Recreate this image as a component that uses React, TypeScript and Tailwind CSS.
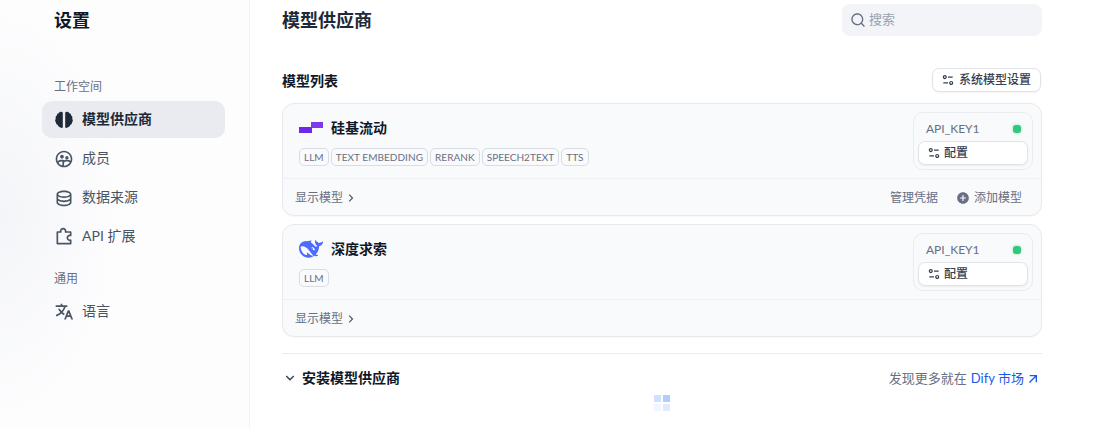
import React from "react";
import {
  RiGroup2Line,
  RiDatabase2Line,
  RiPuzzle2Line,
  RiTranslate2,
  RiEqualizer2Line,
  RiSearchLine,
  RiArrowRightSLine,
  RiArrowDownSLine,
  RiArrowRightUpLine,
  RiAddCircleFill,
} from "react-icons/ri";

const font = "font-['Lato','Noto_Sans_CJK_SC',sans-serif]";

function BrainIcon() {
  return (
    <svg width="20" height="20" viewBox="0 0 20 20" fill="currentColor">
      <path d="M8.800 2.400C7.300 1.300 5.300 1.900 4.700 3.300 3.600 3.400 2.800 4.300 2.900 5.400 1.700 6 1.200 7.500 1.800 8.700 0.900 9.900 1 11.500 2 12.400 1.900 13.500 2.600 14.400 3.500 14.600 3.800 16.100 4.900 17.100 6.200 17.300 7.100 18.200 8 18.200 8.800 17.500Z" />
      <path d="M11.200 2.400C12.700 1.300 14.700 1.900 15.300 3.300 16.400 3.400 17.200 4.300 17.100 5.400 18.300 6 18.800 7.500 18.200 8.700 19.100 9.900 19 11.500 18 12.400 18.100 13.500 17.400 14.400 16.500 14.600 16.200 16.100 15.100 17.100 13.800 17.300 12.900 18.200 12 18.200 11.200 17.500Z" />
    </svg>
  );
}

function NavItem({ icon, label, active }: { icon: React.ReactNode; label: string; active?: boolean }) {
  return (
    <div
      className={`flex h-[37px] items-center gap-[8px] rounded-[10px] pl-[12px] text-[14px] ${
        active ? "bg-[#e9ebf0] font-semibold text-[#1d2939]" : "text-[#495464]"
      }`}
    >
      <span className={`text-[20px] ${active ? "text-[#1d2939]" : "text-[#495464]"}`}>{icon}</span>
      <span className="pb-[2px]">{label}</span>
    </div>
  );
}

function Tag({ children }: { children: React.ReactNode }) {
  return (
    <span className="flex h-[18px] items-center rounded-[5px] border border-[#d9dce3] px-[4px] text-[10px] leading-none tracking-[0.05px] text-[#676f83]">
      {children}
    </span>
  );
}

function ApiBox() {
  return (
    <div className="h-[58px] w-[120px] rounded-[10px] border border-[#eaecf0] bg-[#f9fafb] p-[4px]">
      <div className="flex h-[24px] items-center justify-between pl-[8px] pr-[7px] text-[12px] text-[#676f83]">
        <span>API_KEY1</span>
        <span className="h-[8px] w-[8px] rounded-[3px] bg-[#32c77d] shadow-[0_0_3px_rgba(50,199,125,0.5)]" />
      </div>
      <div className="flex h-[24px] items-center gap-[3px] rounded-[7px] border border-[#e1e3e9] bg-white pl-[8px] text-[12px] font-medium text-[#354052] shadow-[0_1px_2px_rgba(16,24,40,0.06)]">
        <RiEqualizer2Line className="text-[14px]" />
        配置
      </div>
    </div>
  );
}

function ProviderCard({
  logo,
  name,
  tags,
  actions,
}: {
  logo: React.ReactNode;
  name: string;
  tags: string[];
  actions?: boolean;
}) {
  return (
    <div className="rounded-[12px] border border-[#e8e9ed] bg-[#f9fafb] shadow-[0_1px_1px_rgba(16,24,40,0.03)]">
      <div className="flex h-[74px] justify-between pl-[16px] pr-[8px] pt-[8px]">
        <div>
          <div className="flex h-[32px] items-center gap-[8px]">
            {logo}
            <span className="pb-[2px] text-[14px] font-semibold text-[#101828]">{name}</span>
          </div>
          <div className="mt-[4px] flex gap-[2px]">
            {tags.map((t) => (
              <Tag key={t}>{t}</Tag>
            ))}
          </div>
        </div>
        <ApiBox />
      </div>
      <div className="flex h-[37px] items-center justify-between border-t border-[#f0f1f4] pl-[12px] pr-[19px] pt-[1px] text-[12px] text-[#676f83]">
        <div className="flex items-center gap-[1px]">
          显示模型
          <RiArrowRightSLine className="text-[14px] text-[#495464]" />
        </div>
        {actions && (
          <div className="flex items-center gap-[18px]">
            <span>管理凭据</span>
            <span className="flex items-center gap-[4px]">
              <RiAddCircleFill className="text-[14px] text-[#676f83]" />
              添加模型
            </span>
          </div>
        )}
      </div>
    </div>
  );
}

function SiliconLogo() {
  return (
    <svg width="24" height="24" viewBox="0 0 24 24" className="shrink-0">
      <rect x="0" y="11" width="13" height="6" fill="#6d28e8" />
      <rect x="12" y="6" width="12" height="6" fill="#7c3aed" />
    </svg>
  );
}

function WhaleLogo() {
  return (
    <svg width="24" height="24" viewBox="0 0 24 24" className="shrink-0">
      <path
        fill="#4d6bfe"
        d="M23.748 4.482c-.254-.124-.364.113-.512.234-.051.039-.094.09-.137.136-.372.397-.806.657-1.373.626-.829-.046-1.537.214-2.163.848-.133-.782-.575-1.248-1.247-1.548-.352-.156-.708-.311-.955-.65-.172-.241-.219-.51-.305-.774-.055-.16-.11-.323-.293-.35-.2-.031-.278.136-.356.276-.313.572-.434 1.202-.422 1.84.027 1.436.633 2.58 1.838 3.393.137.093.172.187.129.323-.082.28-.18.552-.266.833-.055.179-.137.217-.329.14a5.526 5.526 0 01-1.736-1.18c-.857-.828-1.631-1.742-2.597-2.458a11.365 11.365 0 00-.689-.471c-.985-.957.13-1.743.388-1.836.27-.098.093-.432-.779-.428-.872.004-1.67.295-2.687.684a3.055 3.055 0 01-.465.137 9.597 9.597 0 00-2.883-.102c-1.885.21-3.39 1.102-4.497 2.623C.082 8.606-.231 10.684.152 12.85c.403 2.284 1.569 4.175 3.36 5.653 1.858 1.533 3.997 2.284 6.438 2.14 1.482-.085 3.133-.284 4.994-1.86.47.234.962.327 1.78.397.63.059 1.236-.03 1.705-.128.735-.156.684-.837.419-.961-2.155-1.004-1.682-.595-2.113-.926 1.096-1.296 2.746-2.642 3.392-7.003.05-.347.007-.565 0-.845-.004-.17.035-.237.23-.256a4.173 4.173 0 001.545-.475c1.396-.763 1.96-2.015 2.093-3.517.02-.23-.004-.467-.247-.588zM11.581 18c-2.089-1.642-3.102-2.183-3.52-2.16-.392.024-.321.471-.235.763.09.288.207.486.371.739.114.167.192.416-.113.603-.673.416-1.842-.14-1.897-.167-1.361-.802-2.5-1.86-3.301-3.307-.774-1.393-1.224-2.887-1.298-4.482-.02-.386.093-.522.477-.592a4.696 4.696 0 011.529-.039c2.132.312 3.946 1.265 5.468 2.774.868.86 1.525 1.887 2.202 2.891.72 1.066 1.494 2.082 2.48 2.914.348.292.625.514.891.677-.802.09-2.14.11-3.054-.614zm1-6.44a.306.306 0 01.415-.287.302.302 0 01.2.288.306.306 0 01-.31.307.303.303 0 01-.304-.308zm3.11 1.596c-.2.081-.399.151-.59.16a1.245 1.245 0 01-.798-.254c-.274-.23-.47-.358-.552-.758a1.73 1.73 0 01.016-.588c.07-.327-.008-.537-.239-.727-.187-.156-.426-.199-.688-.199a.559.559 0 01-.254-.078c-.11-.054-.2-.19-.114-.358.028-.054.16-.186.192-.21.356-.202.767-.136 1.146.016.352.144.618.408 1.001.782.391.451.462.576.685.914.176.265.336.537.445.848.067.195-.019.354-.25.452z"
      />
    </svg>
  );
}

export default function App() {
  return (
    <div className={`flex h-[429px] w-[1094px] overflow-hidden bg-white ${font}`}>
      <aside className="flex h-full w-[250px] shrink-0 flex-col border-r border-[#f2f3f6] bg-[radial-gradient(ellipse_130px_230px_at_0%_50%,#f4f5f8,#fdfdfe_90%)] pl-[42px] pr-[24px]">
        <div className="flex h-[40px] items-center pl-[12px] text-[18px] font-semibold text-[#101828]">设置</div>
        <div className="mt-[38px] h-[23px] pl-[12px] text-[12px] leading-[18px] text-[#676f83]">工作空间</div>
        <div className="flex flex-col gap-[2px]">
          <NavItem active icon={<BrainIcon />} label="模型供应商" />
          <NavItem icon={<RiGroup2Line />} label="成员" />
          <NavItem icon={<RiDatabase2Line />} label="数据来源" />
          <NavItem icon={<RiPuzzle2Line />} label="API 扩展" />
        </div>
        <div className="mt-[15px] h-[21px] pl-[12px] text-[12px] leading-[18px] text-[#676f83]">通用</div>
        <div className="mt-[2px]">
          <NavItem icon={<RiTranslate2 />} label="语言" />
        </div>
      </aside>

      <main className="ml-[32px] w-[760px] shrink-0">
        <div className="flex h-[40px] items-center justify-between">
          <h1 className="text-[18px] font-semibold text-[#1d2939]">模型供应商</h1>
          <div className="flex h-[32px] w-[200px] items-center gap-[3px] rounded-[8px] bg-[#f2f4f7] pl-[8px] text-[13px] text-[#98a2b2]">
            <RiSearchLine className="text-[16px] text-[#676f83]" />
            搜索
          </div>
        </div>

        <div className="mt-[28px] flex h-[24px] items-center justify-between">
          <span className="text-[14px] font-semibold text-[#101828]">模型列表</span>
          <div className="mr-[1px] flex h-[24px] w-[109px] items-center gap-[4px] rounded-[7px] border border-[#e1e3e9] bg-white pl-[8px] text-[12px] font-medium text-[#354052] shadow-[0_1px_2px_rgba(16,24,40,0.05)]">
            <RiEqualizer2Line className="text-[14px]" />
            系统模型设置
          </div>
        </div>

        <div className="mt-[11px] flex flex-col gap-[8px]">
          <ProviderCard
            logo={<SiliconLogo />}
            name="硅基流动"
            tags={["LLM", "TEXT EMBEDDING", "RERANK", "SPEECH2TEXT", "TTS"]}
            actions
          />
          <ProviderCard logo={<WhaleLogo />} name="深度求索" tags={["LLM"]} />
        </div>

        <div className="mt-[16px] border-t border-[#eaecf0]" />

        <div className="flex h-[49px] items-center justify-between">
          <div className="flex items-center gap-[4px] pb-[2px] text-[14px] font-semibold text-[#101828]">
            <RiArrowDownSLine className="text-[16px] text-[#354052]" />
            安装模型供应商
          </div>
          <div className="flex items-center pr-[1px] text-[13px] text-[#676f83]">
            发现更多就在
            <span className="ml-[4px] text-[#155aef]">Dify 市场</span>
            <RiArrowRightUpLine className="ml-[1px] text-[16px] text-[#155aef]" />
          </div>
        </div>

        <div className="mx-auto mt-[-8px] grid w-[16px] grid-cols-2 gap-[2px]">
          <span className="h-[7px] w-[7px] bg-[#d1e0ff]" />
          <span className="h-[7px] w-[7px] bg-[#b2ccff]" />
          <span className="h-[7px] w-[7px] bg-[#f0f5ff]" />
          <span className="h-[7px] w-[7px] bg-[#e0eaff]" />
        </div>
      </main>
    </div>
  );
}
